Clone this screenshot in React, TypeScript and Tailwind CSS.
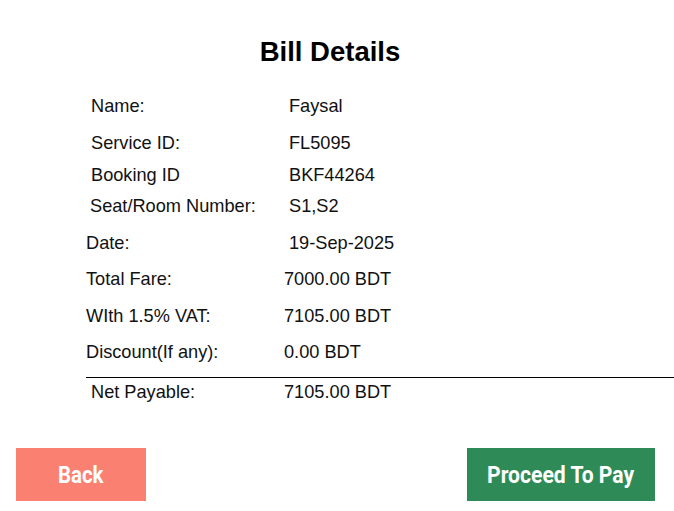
const rows = [
  { label: 'Name:', value: 'Faysal', mt: 'mt-[0px]', pl: 'pl-[91px]', w: 'w-[198px]' },
  { label: 'Service ID:', value: 'FL5095', mt: 'mt-[19px]', pl: 'pl-[91px]', w: 'w-[198px]' },
  { label: 'Booking ID', value: 'BKF44264', mt: 'mt-[14px]', pl: 'pl-[91px]', w: 'w-[198px]' },
  { label: 'Seat/Room Number:', value: 'S1,S2', mt: 'mt-[13px]', pl: 'pl-[90px]', w: 'w-[199px]' },
  { label: 'Date:', value: '19-Sep-2025', mt: 'mt-[19px]', pl: 'pl-[86px]', w: 'w-[203px]' },
  { label: 'Total Fare:', value: '7000.00 BDT', mt: 'mt-[18px]', pl: 'pl-[86px]', w: 'w-[198px]' },
  { label: 'WIth 1.5% VAT:', value: '7105.00 BDT', mt: 'mt-[19px]', pl: 'pl-[86px]', w: 'w-[198px]' },
  { label: 'Discount(If any):', value: '0.00 BDT', mt: 'mt-[18px]', pl: 'pl-[86px]', w: 'w-[198px]' },
];

export default function App() {
  return (
    <div className="w-[674px] h-[511px] bg-white text-black font-['Liberation_Sans',Arial,sans-serif] overflow-hidden">
      <h1 className="pt-[37px] h-[66px] pr-[14px] text-center text-[27.5px] leading-[30px] font-bold">
        Bill Details
      </h1>

      <div className="mt-[31px] flex flex-col text-[18.2px] leading-[18px] text-[#111]">
        {rows.map((r) => (
          <div key={r.label} className={`flex ${r.mt} ${r.pl}`}>
            <span className={r.w}>{r.label}</span>
            <span>{r.value}</span>
          </div>
        ))}

        <div className="mt-[16px] ml-[86px] h-px bg-black" />

        <div className="mt-[5px] flex pl-[91px]">
          <span className="w-[193px]">Net Payable:</span>
          <span>7105.00 BDT</span>
        </div>
      </div>

      <div className="mt-[47px] flex justify-between pl-[16px] pr-[19px]">
        <button className="w-[130px] h-[53px] bg-[#fa8072] text-white flex items-center justify-center">
          <span className="inline-block scale-x-[0.85] text-[24px] font-bold font-['Roboto',sans-serif]">Back</span>
        </button>
        <button className="w-[188px] h-[53px] bg-[#2e8b57] text-white flex items-center justify-center">
          <span className="inline-block scale-x-[0.88] text-[24px] font-bold font-['Roboto',sans-serif] whitespace-nowrap">Proceed To Pay</span>
        </button>
      </div>
    </div>
  );
}
